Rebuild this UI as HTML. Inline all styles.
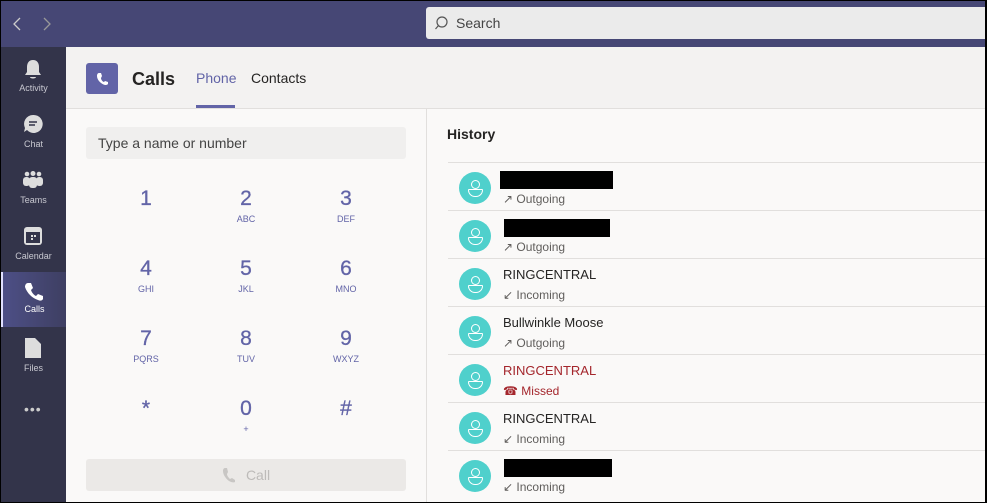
<!DOCTYPE html>
<html><head><meta charset="utf-8"><style>
*{margin:0;padding:0;box-sizing:border-box}
body{width:987px;height:503px;overflow:hidden;background:#000;font-family:"Liberation Sans",sans-serif;position:relative}
#f{position:absolute;left:1px;top:1px;width:984px;height:501px;background:#faf9f8;overflow:hidden}
.top{position:absolute;left:0;top:0;width:984px;height:46px;background:#464775}
.search{position:absolute;left:425px;top:6px;width:570px;height:32px;background:#ebebeb;border-radius:3px;color:#444;font-size:14px;line-height:32px;padding-left:30px}
.side{position:absolute;left:0;top:46px;width:65px;height:460px;background:#33344a}
.it{position:absolute;left:0;width:65px;height:56px;color:#c8c8d0;font-size:9px;text-align:center}
.it span{position:absolute;left:0;right:0;top:32px}
.it.act{background:linear-gradient(90deg,#4d4f86,#3e3f62);color:#fff;border-left:2px solid #e0e0ff}
.hdr{position:absolute;left:65px;top:46px;width:919px;height:62px;background:#f3f2f1;border-bottom:1px solid #e1dfdd}
.dig{position:absolute;width:60px;text-align:center;color:#6264a7}
.dig b{display:block;font-size:21px;font-weight:normal;-webkit-text-stroke:0.3px #6264a7}
.dig i{display:block;font-style:normal;font-size:9px;margin-top:3px}
.row{position:absolute;left:447px;width:540px;height:48px;border-top:1px solid #e1dfdd}
.av{position:absolute;left:11px;top:9px;width:32px;height:32px;border-radius:50%;background:#4fd0cc}
.av:before{content:"";position:absolute;left:12px;top:8px;width:7px;height:7px;border:1.3px solid #fff;border-radius:50%}
.av:after{content:"";position:absolute;left:9px;top:17px;width:13px;height:6px;border:1.3px solid #fff;border-radius:1px 1px 7px 7px}
.nm{position:absolute;left:55px;top:8px;font-size:13px;color:#252423}
.st{position:absolute;left:55px;top:29px;font-size:12px;color:#605e5c}
.blk{position:absolute;background:#000;height:18px}
</style></head><body><div id="f">
<div class="top">
<svg style="position:absolute;left:12px;top:16px" width="40" height="14"><path d="M7 1L1 7L7 13" stroke="#ccc" fill="none" stroke-width="1.3"/><path d="M31 1L37 7L31 13" stroke="#999" fill="none" stroke-width="1.3"/></svg>
<div class="search"><svg style="position:absolute;left:9px;top:9px" width="14" height="16"><circle cx="7" cy="6" r="5" stroke="#555" fill="none" stroke-width="1.2"/><path d="M3.5 9.5L0.5 13" stroke="#555" stroke-width="1.2"/></svg>Search</div>
</div>
<div class="side">
<div class="it" style="top:4px"><svg style="position:absolute;left:23px;top:8px" width="18" height="22"><path d="M9 1C5 1 3 4 3 8V13L1 16H17L15 13V8C15 4 13 1 9 1Z M6 18H12C12 20 6 20 6 18Z" fill="#ddd"/></svg><span>Activity</span></div>
<div class="it" style="top:60px"><svg style="position:absolute;left:22px;top:7px" width="20" height="20"><path d="M10 1A9 9 0 1 1 4 16L1 18L2 14A9 9 0 0 1 10 1Z" fill="#ddd"/><path d="M6 8H14M6 11H12" stroke="#33344a" stroke-width="1.5"/></svg><span>Chat</span></div>
<div class="it" style="top:116px"><svg style="position:absolute;left:21px;top:8px" width="22" height="18"><circle cx="5" cy="3" r="2.3" fill="#ddd"/><circle cx="11" cy="2.5" r="2.5" fill="#ddd"/><circle cx="17" cy="3" r="2.3" fill="#ddd"/><rect x="1" y="6" width="7" height="9" rx="3" fill="#ddd"/><rect x="7" y="6" width="8" height="11" rx="3" fill="#ddd"/><rect x="14" y="6" width="7" height="9" rx="3" fill="#ddd"/></svg><span>Teams</span></div>
<div class="it" style="top:172px"><svg style="position:absolute;left:23px;top:8px" width="18" height="18"><rect x="0" y="0" width="18" height="18" rx="3" fill="#ddd"/><rect x="2" y="5" width="14" height="11" fill="#33344a"/><rect x="7" y="8" width="2" height="2" fill="#ddd"/><rect x="10" y="8" width="2" height="2" fill="#ddd"/><rect x="7" y="11" width="2" height="2" fill="#ddd"/></svg><span>Calendar</span></div>
<div class="it act" style="top:225px;height:55px"><svg style="position:absolute;left:21px;top:10px" width="20" height="20"><path d="M4 1L7 1L9 6L7 8C8 11 10 13 12 14L14 12L19 14L19 17C18 19 16 19 14 18C8 16 3 11 1 5C1 3 2 1 4 1Z" fill="#fff"/></svg><span>Calls</span></div>
<div class="it" style="top:284px"><svg style="position:absolute;left:24px;top:7px" width="16" height="20"><path d="M0 0H10L16 6V20H0Z" fill="#ddd"/></svg><span>Files</span></div>
<div style="position:absolute;left:23px;top:354px;color:#ccc;font-size:14px;letter-spacing:1px">•••</div>
</div>
<div class="hdr">
<div style="position:absolute;left:20px;top:16px;width:32px;height:31px;background:#6264a7;border-radius:3px"><svg style="position:absolute;left:10px;top:9px" width="13" height="14"><path d="M3 1L5 1L6 4L5 6C5 8 7 10 8 10L9 9L12 10L12 12C11 13 10 13 9 13C5 12 1 8 1 4C1 2 2 1 3 1Z" fill="#fff"/></svg></div>
<div style="position:absolute;left:66px;top:22px;font-size:18px;font-weight:bold;color:#252423">Calls</div>
<div style="position:absolute;left:130px;top:23px;font-size:14px;color:#6264a7">Phone</div>
<div style="position:absolute;left:130px;top:58px;width:39px;height:3px;background:#6264a7"></div>
<div style="position:absolute;left:185px;top:23px;font-size:14px;color:#252423">Contacts</div>
</div>
<div style="position:absolute;left:85px;top:126px;width:320px;height:32px;background:#f0efee;border-radius:3px;font-size:14px;color:#444;line-height:32px;padding-left:12px">Type a name or number</div>
<div class="dig" style="left:115px;top:186px"><b>1</b><i>&nbsp;</i></div>
<div class="dig" style="left:215px;top:186px"><b>2</b><i>ABC</i></div>
<div class="dig" style="left:315px;top:186px"><b>3</b><i>DEF</i></div>
<div class="dig" style="left:115px;top:256px"><b>4</b><i>GHI</i></div>
<div class="dig" style="left:215px;top:256px"><b>5</b><i>JKL</i></div>
<div class="dig" style="left:315px;top:256px"><b>6</b><i>MNO</i></div>
<div class="dig" style="left:115px;top:326px"><b>7</b><i>PQRS</i></div>
<div class="dig" style="left:215px;top:326px"><b>8</b><i>TUV</i></div>
<div class="dig" style="left:315px;top:326px"><b>9</b><i>WXYZ</i></div>
<div class="dig" style="left:115px;top:396px"><b>*</b><i>&nbsp;</i></div>
<div class="dig" style="left:215px;top:396px"><b>0</b><i>+</i></div>
<div class="dig" style="left:315px;top:396px"><b>#</b><i>&nbsp;</i></div>
<div style="position:absolute;left:85px;top:458px;width:320px;height:32px;background:#ebe9e7;border-radius:3px;color:#bdbbb9;font-size:14px;line-height:32px;text-align:center"><svg style="vertical-align:-3px;margin-right:10px" width="14" height="16"><path d="M3 1L5 1L6 5L5 7C5 9 7 11 8 12L10 11L13 13L13 15C11 16 9 15 7 14C3 11 1 7 1 4C1 2 2 1 3 1Z" fill="#c8c6c4"/></svg>Call</div>
<div style="position:absolute;left:425px;top:108px;width:1px;height:400px;background:#e1dfdd"></div>
<div style="position:absolute;left:446px;top:125px;font-size:14px;font-weight:bold;color:#252423">History</div>
<div class="row" style="top:161px"><div class="av"></div><div class="blk" style="left:52px;top:8px;width:113px"></div><div class="st">↗ Outgoing</div></div>
<div class="row" style="top:209px"><div class="av"></div><div class="blk" style="left:56px;top:8px;width:106px"></div><div class="st">↗ Outgoing</div></div>
<div class="row" style="top:257px"><div class="av"></div><div class="nm">RINGCENTRAL</div><div class="st">↙ Incoming</div></div>
<div class="row" style="top:305px"><div class="av"></div><div class="nm">Bullwinkle Moose</div><div class="st">↗ Outgoing</div></div>
<div class="row" style="top:353px"><div class="av"></div><div class="nm" style="color:#a4262c">RINGCENTRAL</div><div class="st" style="color:#a4262c">☎ Missed</div></div>
<div class="row" style="top:401px"><div class="av"></div><div class="nm">RINGCENTRAL</div><div class="st">↙ Incoming</div></div>
<div class="row" style="top:449px"><div class="av"></div><div class="blk" style="left:56px;top:8px;width:108px"></div><div class="st">↙ Incoming</div></div>
</div></body></html>
